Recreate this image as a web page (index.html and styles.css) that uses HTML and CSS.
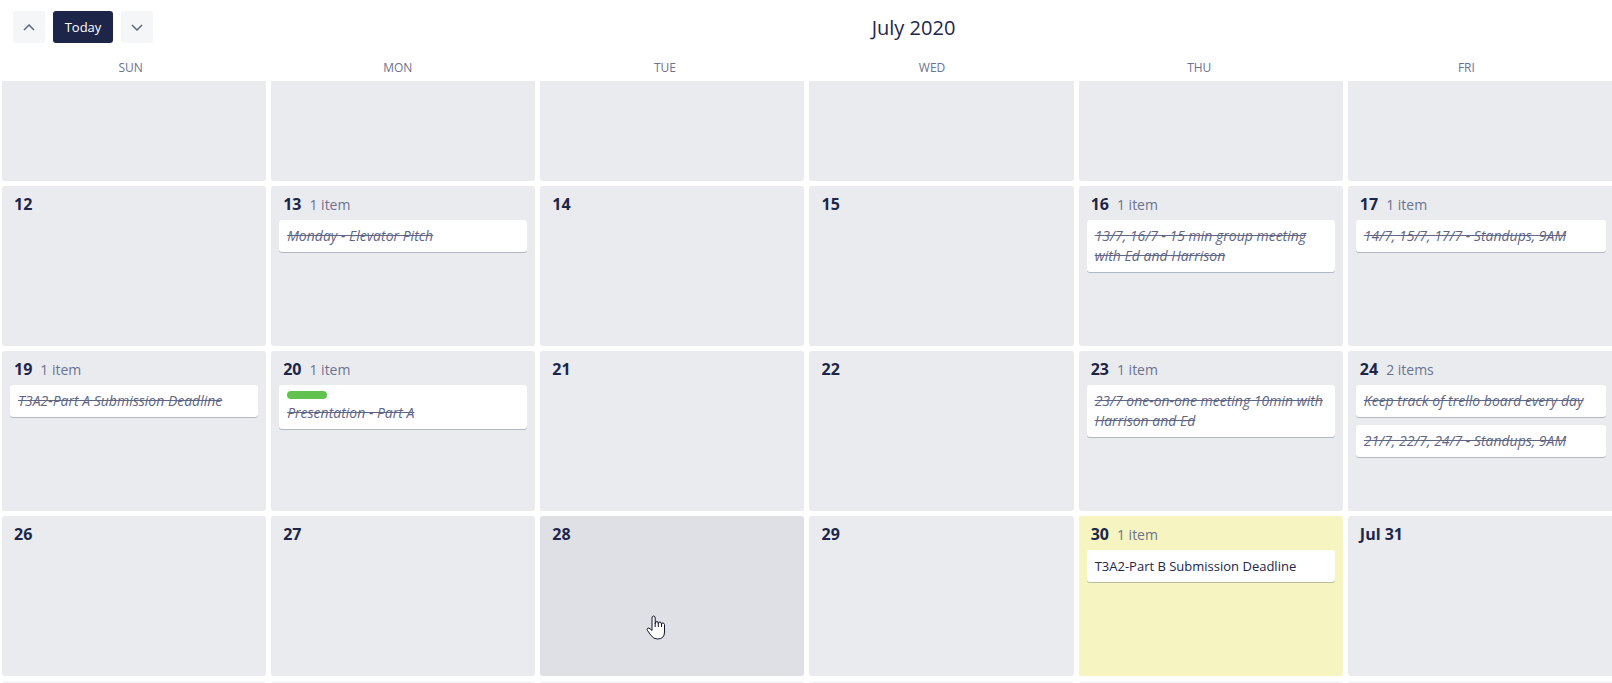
FILE: index.html
```html
<!DOCTYPE html>
<html lang="en">
<head>
<meta charset="utf-8">
<title>July 2020</title>
<link rel="stylesheet" href="styles.css">
</head>
<body>
<header class="toolbar">
  <div class="nav">
    <button class="nav-button" type="button" aria-label="Previous week"><svg width="12" height="7" viewBox="0 0 12 7"><path d="M1 6 6 1l5 5"/></svg></button>
    <button class="today-button" type="button">Today</button>
    <button class="nav-button" type="button" aria-label="Next week"><svg width="12" height="7" viewBox="0 0 12 7"><path d="m1 1 5 5 5-5"/></svg></button>
  </div>
  <h1 class="title">July 2020</h1>
</header>
<div class="weekdays"><span>SUN</span><span>MON</span><span>TUE</span><span>WED</span><span>THU</span><span>FRI</span></div>
<main class="calendar">
  <section class="week week-partial">
    <div class="day"></div><div class="day"></div><div class="day"></div><div class="day"></div><div class="day"></div><div class="day"></div>
  </section>
  <section class="week">
    <div class="day"><div class="day-head"><b>12</b></div></div>
    <div class="day"><div class="day-head"><b>13</b><span>1 item</span></div>
      <a class="card done" href="#">Monday - Elevator Pitch</a></div>
    <div class="day"><div class="day-head"><b>14</b></div></div>
    <div class="day"><div class="day-head"><b>15</b></div></div>
    <div class="day"><div class="day-head"><b>16</b><span>1 item</span></div>
      <a class="card done" href="#">13/7, 16/7 - 15 min group meeting with Ed and Harrison</a></div>
    <div class="day"><div class="day-head"><b>17</b><span>1 item</span></div>
      <a class="card done" href="#">14/7, 15/7, 17/7 - Standups, 9AM</a></div>
  </section>
  <section class="week">
    <div class="day"><div class="day-head"><b>19</b><span>1 item</span></div>
      <a class="card done" href="#">T3A2-Part A Submission Deadline</a></div>
    <div class="day"><div class="day-head"><b>20</b><span>1 item</span></div>
      <a class="card done" href="#"><i class="label"></i>Presentation - Part A</a></div>
    <div class="day"><div class="day-head"><b>21</b></div></div>
    <div class="day"><div class="day-head"><b>22</b></div></div>
    <div class="day"><div class="day-head"><b>23</b><span>1 item</span></div>
      <a class="card done" href="#">23/7 one-on-one meeting 10min with Harrison and Ed</a></div>
    <div class="day"><div class="day-head"><b>24</b><span>2 items</span></div>
      <a class="card done" href="#">Keep track of trello board every day</a>
      <a class="card done" href="#">21/7, 22/7, 24/7 - Standups, 9AM</a></div>
  </section>
  <section class="week">
    <div class="day"><div class="day-head"><b>26</b></div></div>
    <div class="day"><div class="day-head"><b>27</b></div></div>
    <div class="day hovered"><div class="day-head"><b>28</b></div>
      <svg class="pointer" width="20" height="25" viewBox="0 0 20 25"><path d="M6 14V3Q6 1 7.500 1T9.200 3V8.500Q9.500 6.500 11 6.500T12.300 8.500Q12.700 7 14 7T15.500 9Q16 7.800 17 7.900T18.500 9.500V17Q18.500 24 11.500 24 7.500 24 5 20.500L1.500 15.500Q.5 14 1.700 13.300T4 13.700L6 15.500Z"/><path class="fingers" d="M9.200 8v4M12.300 8v4M15.500 9v3"/></svg>
    </div>
    <div class="day"><div class="day-head"><b>29</b></div></div>
    <div class="day today"><div class="day-head"><b>30</b><span>1 item</span></div>
      <a class="card" href="#">T3A2-Part B Submission Deadline</a></div>
    <div class="day"><div class="day-head"><b>Jul 31</b></div></div>
  </section>
  <section class="week week-next">
    <div class="day"></div><div class="day"></div><div class="day"></div><div class="day"></div><div class="day"></div><div class="day"></div>
  </section>
</main>
</body>
</html>
```
FILE: styles.css
```css
* {
  box-sizing: border-box;
}

body {
  display: flex;
  flex-direction: column;
  height: 100vh;
  margin: 0;
  overflow: hidden;
  background: #fff;
  color: #1d2649;
  font-family: "Segoe UI", "Open Sans", "Noto Sans", sans-serif;
  font-size: 14px;
  line-height: 20px;
}

.toolbar {
  display: flex;
  align-items: center;
  gap: 62px;
  padding: 11px 0 11px 13px;
}

.nav {
  display: flex;
  gap: 8px;
}

.nav-button,
.today-button {
  display: flex;
  align-items: center;
  justify-content: center;
  width: 32px;
  height: 32px;
  padding: 0;
  border: 0;
  border-radius: 3px;
  background: #f5f6f8;
  font: inherit;
}

.today-button {
  width: 60px;
  background: #1d2649;
  color: #fff;
  font-size: 13px;
  font-weight: 500;
}

.nav-button path {
  fill: none;
  stroke: #5e6684;
  stroke-width: 1.5;
}

.title {
  flex: 1;
  margin: 0;
  padding-top: 2px;
  font-size: 20px;
  font-weight: 500;
  line-height: 30px;
  text-align: center;
}

.weekdays {
  display: grid;
  grid-template-columns: repeat(6, 1fr);
  margin: 0 12px 0 -3px;
  padding: 4px 0 3px;
  color: #6b738f;
  font-size: 12px;
  text-align: center;
}

.calendar {
  display: flex;
  flex: 1;
  flex-direction: column;
  gap: 5px;
  min-height: 0;
  padding-left: 2px;
  overflow: hidden;
}

.week {
  display: grid;
  flex: none;
  grid-template-columns: repeat(6, minmax(0, 1fr));
  gap: 5px;
  min-height: 160px;
}

.day {
  position: relative;
  display: flex;
  flex-direction: column;
  gap: 7px;
  padding: 8px;
  border-radius: 3px;
  background: #eaebef;
}

.day:last-child {
  padding-right: 6px;
  border-top-right-radius: 0;
  border-bottom-right-radius: 0;
}

.week-partial {
  min-height: 100px;
}

.week-partial .day {
  border-top-left-radius: 0;
  border-top-right-radius: 0;
}

.week-next .day {
  background: #f4f5f7;
}

.day.hovered {
  background: #dfe0e6;
}

.day.today {
  background: #f6f4c1;
}

.day-head {
  display: flex;
  align-items: baseline;
  gap: 8px;
  height: 19px;
  padding-left: 4px;
}

.day-head b {
  font-size: 16px;
  font-weight: 700;
}

.day-head span {
  color: #6b738f;
}

.card {
  padding: 6px 8px;
  border-radius: 3px;
  background: #fff;
  box-shadow: 0 1px 0 #091e4240;
  color: #1d2649;
  font-size: 13px;
  text-decoration: none;
}

.card + .card {
  margin-top: 1px;
}

.card.done {
  color: #5e6684;
  font-size: 14px;
  font-style: italic;
  text-decoration: line-through;
}

.label {
  display: block;
  width: 40px;
  height: 8px;
  margin-bottom: 4px;
  border-radius: 4px;
  background: #61c250;
}

.pointer {
  position: absolute;
  top: 62%;
  left: 40%;
  fill: #fff;
  stroke: #101426;
}

.pointer .fingers {
  fill: none;
}
```
